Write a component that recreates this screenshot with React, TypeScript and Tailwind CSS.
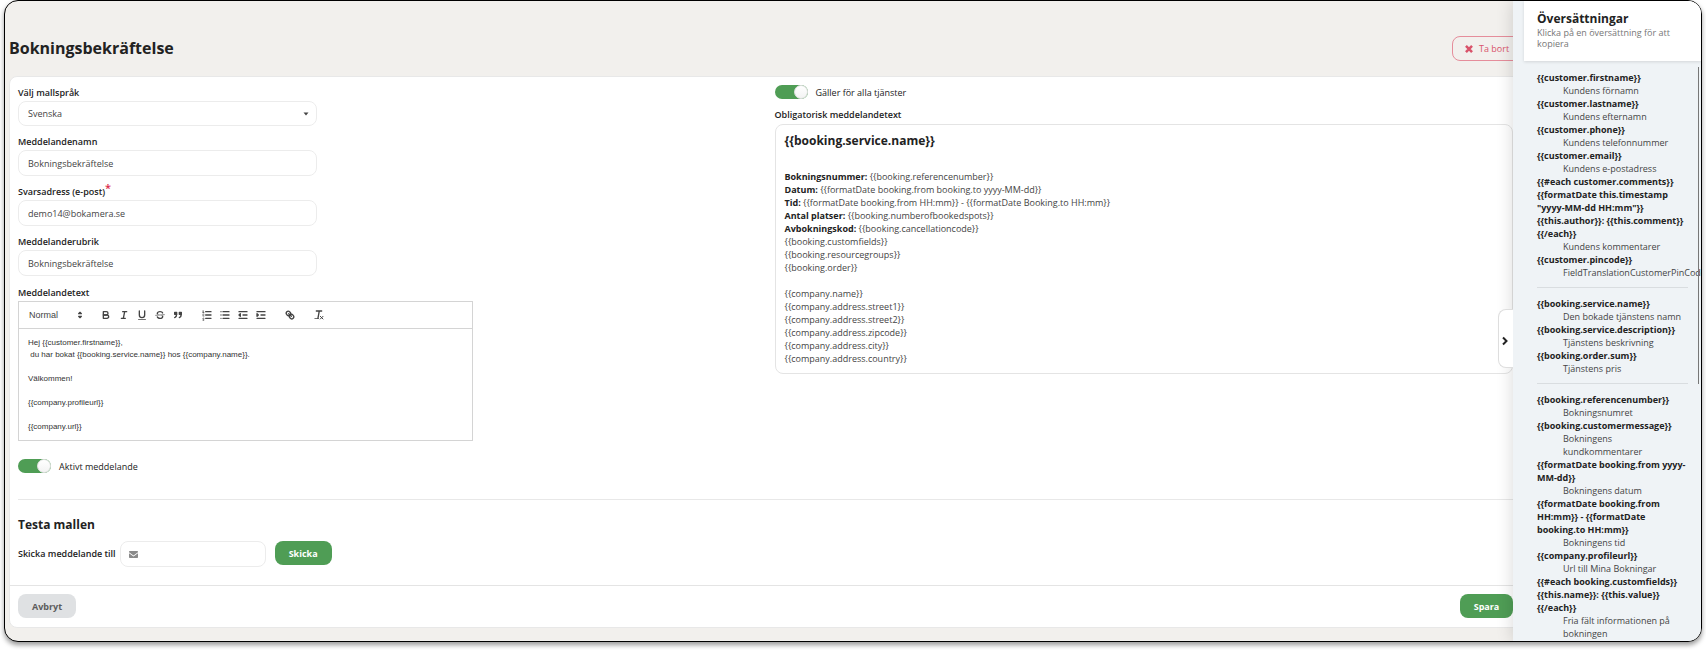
import type { ReactNode } from "react";

function Toggle({ id, label }: { id: string; label: string }) {
  return (
    <label htmlFor={id} className="flex w-fit cursor-pointer items-center gap-2">
      <input id={id} type="checkbox" defaultChecked className="peer sr-only" />
      <span className="flex h-[14px] w-[33px] items-center justify-end rounded-full bg-[#4f9d55]">
        <span className="size-[14px] rounded-full border border-[#e2e2e2] bg-gradient-to-b from-white to-[#f3f3f3]" />
      </span>
      <span>{label}</span>
    </label>
  );
}

const labelClass = "mb-[2px] flex h-[14px] items-center font-semibold";
const inputClass =
  "block h-[26px] w-full rounded-lg border border-[#ececec] bg-white px-[9px] text-[#444] outline-none";

function Field({
  id,
  label,
  value,
  required,
}: {
  id: string;
  label: string;
  value: string;
  required?: boolean;
}) {
  return (
    <div className="mt-2 max-w-[299px]">
      <label htmlFor={id} className={labelClass}>
        {label}
        {required && <span className="self-start text-[11px] leading-[8px] text-[#db2b49]">*</span>}
      </label>
      <input id={id} className={inputClass} defaultValue={value} />
    </div>
  );
}

function Tool({ label, children }: { label: string; children: ReactNode }) {
  return (
    <button type="button" aria-label={label} className="flex h-4 w-[18px] items-center justify-center">
      <svg viewBox="0 0 18 18" className="size-3" fill="none" stroke="#444" strokeWidth="2" strokeLinecap="round" strokeLinejoin="round">
        {children}
      </svg>
    </button>
  );
}

function Toolbar() {
  return (
    <div className="flex h-[27px] items-center gap-[11px] border-b border-[#d4d4d4] px-[5px]">
      <div className="relative flex w-[62px] items-center">
        <select aria-label="Textformat" className="w-full appearance-none bg-transparent pl-[5px] font-['Liberation_Sans',sans-serif] text-[9px] text-[#444] outline-none">
          <option>Normal</option>
        </select>
        <svg viewBox="0 0 18 18" className="pointer-events-none absolute right-0 size-3" fill="#444" stroke="#444" strokeWidth="2" strokeLinejoin="round">
          <polygon points="7 11 9 13 11 11" />
          <polygon points="7 7 9 5 11 7" />
        </svg>
      </div>
      <div className="flex">
        <Tool label="Fet">
          <path d="M5,4H9.5A2.5,2.5,0,0,1,12,6.5v0A2.5,2.5,0,0,1,9.5,9H5A0,0,0,0,1,5,9V4A0,0,0,0,1,5,4Z" />
          <path d="M5,9h5.5A2.5,2.5,0,0,1,13,11.5v0A2.5,2.5,0,0,1,10.5,14H5a0,0,0,0,1,0,0V9A0,0,0,0,1,5,9Z" />
        </Tool>
        <Tool label="Kursiv">
          <line x1="7" x2="13" y1="4" y2="4" />
          <line x1="5" x2="11" y1="14" y2="14" />
          <line x1="8" x2="10" y1="14" y2="4" />
        </Tool>
        <Tool label="Understruken">
          <path d="M5,3V9a4.012,4.012,0,0,0,4,4H9a4.012,4.012,0,0,0,4-4V3" />
          <rect fill="#444" stroke="none" height="1" rx="0.5" ry="0.5" width="12" x="3" y="15" />
        </Tool>
        <Tool label="Genomstruken">
          <line strokeWidth="1" x1="15.5" x2="2.5" y1="8.5" y2="9.5" />
          <path fill="#444" stroke="none" d="M9.007,8C6.542,7.791,6,7.519,6,6.5,6,5.792,7.283,5,9,5c1.571,0,2.765.679,2.969,1.309a1,1,0,0,0,1.9-.617C13.356,4.106,11.354,3,9,3,6.2,3,4,4.538,4,6.5a3.2,3.2,0,0,0,.5,1.843Z" />
          <path fill="#444" stroke="none" d="M8.984,10C11.457,10.208,12,10.479,12,11.5c0,0.708-1.283,1.5-3,1.5-1.571,0-2.765-.679-2.969-1.309a1,1,0,1,0-1.9.617C4.644,13.894,6.646,15,9,15c2.8,0,5-1.538,5-3.5a3.2,3.2,0,0,0-.5-1.843Z" />
        </Tool>
        <Tool label="Citat">
          <g fill="#444">
            <rect height="3" width="3" x="4" y="5" />
            <rect height="3" width="3" x="11" y="5" />
            <path d="M7,8c0,4.031-3,5-3,5" />
            <path d="M14,8c0,4.031-3,5-3,5" />
          </g>
        </Tool>
      </div>
      <div className="flex">
        <Tool label="Numrerad lista">
          <path d="M7 4h8M7 9h8M7 14h8" />
          <path strokeWidth="1" d="M2.5 5.5h2M3.5 5.5v-3l-1 .5M4.5 10.5h-2c0-1 1.9-1.2 1.9-2.1 0-.9-1.3-1.1-1.9-.4M2.5 14.2a1 1 0 1 1 .9 1.3 1 1 0 1 1-.9 1.2" />
        </Tool>
        <Tool label="Punktlista">
          <path d="M6 4h9M6 9h9M6 14h9M3 4h0M3 9h0M3 14h0" />
        </Tool>
        <Tool label="Minska indrag">
          <path d="M3 14h12M3 4h12M9 9h6" />
          <polyline points="5 7 5 11 3 9 5 7" />
        </Tool>
        <Tool label="Öka indrag">
          <path d="M3 14h12M3 4h12M9 9h6" />
          <polyline fill="#444" points="3 7 3 11 5 9 3 7" />
        </Tool>
      </div>
      <Tool label="Länk">
        <line x1="7" x2="11" y1="7" y2="11" />
        <path d="M8.9,4.577a3.476,3.476,0,0,1,.36,4.679A3.476,3.476,0,0,1,4.577,8.9C3.185,7.5,2.035,6.4,4.217,4.217S7.5,3.185,8.9,4.577Z" />
        <path d="M13.423,9.1a3.476,3.476,0,0,0-4.679-.36,3.476,3.476,0,0,0,.36,4.679c1.392,1.392,2.5,2.542,4.679.36S14.815,10.5,13.423,9.1Z" />
      </Tool>
      <Tool label="Rensa format">
        <path d="M5 3h8M7.4 14 9.3 3.5" />
        <path strokeWidth="1.5" d="M11 11l4 4M15 11l-4 4" />
        <rect fill="#444" stroke="none" height="1" rx="0.5" width="7" x="2" y="14" />
      </Tool>
    </div>
  );
}

const message = `Hej {{customer.firstname}},
 du har bokat {{booking.service.name}} hos {{company.name}}.

Välkommen!

{{company.profileurl}}

{{company.url}}`;

const bookingLines: [string, string][] = [
  ["Bokningsnummer:", "{{booking.referencenumber}}"],
  ["Datum:", "{{formatDate booking.from booking.to yyyy-MM-dd}}"],
  ["Tid:", "{{formatDate booking.from HH:mm}} - {{formatDate Booking.to HH:mm}}"],
  ["Antal platser:", "{{booking.numberofbookedspots}}"],
  ["Avbokningskod:", "{{booking.cancellationcode}}"],
  ["", "{{booking.customfields}}"],
  ["", "{{booking.resourcegroups}}"],
  ["", "{{booking.order}}"],
];

const companyLines = [
  "{{company.name}}",
  "{{company.address.street1}}",
  "{{company.address.street2}}",
  "{{company.address.zipcode}}",
  "{{company.address.city}}",
  "{{company.address.country}}",
];

const translations: [string[], string][][] = [
  [
    [["{{customer.firstname}}"], "Kundens förnamn"],
    [["{{customer.lastname}}"], "Kundens efternamn"],
    [["{{customer.phone}}"], "Kundens telefonnummer"],
    [["{{customer.email}}"], "Kundens e-postadress"],
    [
      ["{{#each customer.comments}}", '{{formatDate this.timestamp "yyyy-MM-dd HH:mm"}}', "{{this.author}}: {{this.comment}}", "{{/each}}"],
      "Kundens kommentarer",
    ],
    [["{{customer.pincode}}"], "FieldTranslationCustomerPinCode"],
  ],
  [
    [["{{booking.service.name}}"], "Den bokade tjänstens namn"],
    [["{{booking.service.description}}"], "Tjänstens beskrivning"],
    [["{{booking.order.sum}}"], "Tjänstens pris"],
  ],
  [
    [["{{booking.referencenumber}}"], "Bokningsnumret"],
    [["{{booking.customermessage}}"], "Bokningens kundkommentarer"],
    [["{{formatDate booking.from yyyy-MM-dd}}"], "Bokningens datum"],
    [["{{formatDate booking.from HH:mm}} - {{formatDate booking.to HH:mm}}"], "Bokningens tid"],
    [["{{company.profileurl}}"], "Url till Mina Bokningar"],
    [["{{#each booking.customfields}}", "{{this.name}}: {{this.value}}", "{{/each}}"], "Fria fält informationen på bokningen"],
  ],
];

function Translations() {
  return (
    <aside className="absolute inset-y-0 right-0 w-[188px] bg-[#eff3f6] shadow-[0_0_16px_rgba(0,0,0,0.16)]">
      <button
        type="button"
        aria-label="Dölj översättningar"
        className="absolute top-[308px] right-full flex h-[59px] w-[15px] items-center justify-center rounded-l-lg border border-r-0 border-[#dedede] bg-white pt-1 pr-[2px]"
      >
        <svg viewBox="0 0 8 10" className="h-[10px] w-2" fill="none" stroke="#222" strokeWidth="2">
          <path d="M2 1.5 5.5 5 2 8.5" />
        </svg>
      </button>
      <div className="flex h-full flex-col overflow-hidden">
        <header className="ml-[11px] shrink-0 bg-white px-[13px] pt-[10px] pb-3 shadow-[0_1px_3px_rgba(0,0,0,0.12)]">
          <h2 className="text-[12px] leading-4 font-bold">Översättningar</h2>
          <p className="leading-[11px] text-[#777]">Klicka på en översättning för att kopiera</p>
        </header>
        <div className="relative min-h-0 flex-1">
          <div className="absolute inset-0 overflow-hidden pt-[10px] pr-[13px] pl-6">
            {translations.map((group, i) => (
              <dl key={i} className={i > 0 ? "mt-2 border-t border-[#d9dde0] pt-[9px]" : ""}>
                {group.map(([codes, text]) => (
                  <div key={text}>
                    {codes.map((code) => (
                      <dt key={code} className="font-bold">
                        {code}
                      </dt>
                    ))}
                    <dd className="pl-[26px] text-[#444]">{text}</dd>
                  </div>
                ))}
              </dl>
            ))}
          </div>
          <span className="absolute top-[6px] right-[2px] h-[317px] w-px bg-[#777]" />
        </div>
      </div>
    </aside>
  );
}

export default function App() {
  return (
    <div className="bg-white px-1 pb-2 font-['Open_Sans',sans-serif] text-[9px] leading-[13px] text-[#222]">
      <div className="relative overflow-hidden rounded-[14px] border border-black bg-[#f2f0ed] shadow-[0_3px_5px_rgba(0,0,0,0.4)]">
        <main className="pt-[35px] pr-[179px] pb-[13px] pl-1">
          <div className="flex items-start justify-between">
            <h1 className="text-[16px] leading-6 font-bold">Bokningsbekräftelse</h1>
            <button type="button" className="flex h-[25px] w-[70px] items-center gap-[6px] rounded-lg border border-[#e58d9b] pl-3 text-[#d9546b]">
              <svg viewBox="0 0 10 10" className="size-2" stroke="currentColor" strokeWidth="3.2">
                <path d="M1.2 1.2 8.8 8.8M8.8 1.2 1.2 8.8" />
              </svg>
              Ta bort
            </button>
          </div>

          <form className="mt-[15px] rounded-lg border border-[#e8e8e8] bg-white" onSubmit={(e) => e.preventDefault()}>
            <div className="px-2">
              <div className="grid grid-cols-2 gap-[18px] pt-2">
                <section>
                  <div className="max-w-[299px]">
                    <label htmlFor="language" className={labelClass}>
                      Välj mallspråk
                    </label>
                    <div className="relative">
                      <select id="language" className="block h-[25px] w-full appearance-none rounded-lg border border-[#ececec] bg-white px-[9px] text-[#444] outline-none">
                        <option>Svenska</option>
                      </select>
                      <svg viewBox="0 0 6 4" className="pointer-events-none absolute top-[11px] right-2 h-1 w-[6px] fill-[#444]">
                        <path d="M.5.5h5L3 3.5Z" />
                      </svg>
                    </div>
                  </div>
                  <Field id="name" label="Meddelandenamn" value="Bokningsbekräftelse" />
                  <Field id="reply" label="Svarsadress (e-post)" value="demo14@bokamera.se" required />
                  <Field id="subject" label="Meddelanderubrik" value="Bokningsbekräftelse" />
                  <div className="mt-[9px] max-w-[455px]">
                    <label htmlFor="body" className={labelClass}>
                      Meddelandetext
                    </label>
                    <div className="border border-[#d4d4d4]">
                      <Toolbar />
                      <textarea
                        id="body"
                        rows={8}
                        defaultValue={message}
                        className="block w-full resize-none overflow-hidden px-[9px] pt-2 pb-[7px] font-['Liberation_Sans',sans-serif] text-[8px] leading-3 text-[#333] outline-none"
                      />
                    </div>
                  </div>
                  <div className="mt-[18px]">
                    <Toggle id="active" label="Aktivt meddelande" />
                  </div>
                </section>

                <section>
                  <Toggle id="all" label="Gäller för alla tjänster" />
                  <h3 className="mt-[9px] font-semibold">Obligatorisk meddelandetext</h3>
                  <div className="mt-[3px] rounded-lg border border-[#e4e4e4] px-[9px] pt-[7px] pb-2 text-[#444]">
                    <h2 className="mb-5 text-[12px] leading-[18px] font-bold text-[#222]">{"{{booking.service.name}}"}</h2>
                    {bookingLines.map(([name, value]) => (
                      <p key={value}>
                        {name && <strong className="text-[#222]">{name} </strong>}
                        {value}
                      </p>
                    ))}
                    <div className="mt-[13px]">
                      {companyLines.map((line) => (
                        <p key={line}>{line}</p>
                      ))}
                    </div>
                  </div>
                </section>
              </div>

              <section className="mt-[26px] border-t border-[#e8e8e8] pt-4 pb-[18px]">
                <h2 className="text-[12px] leading-[18px] font-bold">Testa mallen</h2>
                <div className="mt-[7px] flex items-start">
                  <label htmlFor="test" className="leading-[25px] font-semibold">
                    Skicka meddelande till
                  </label>
                  <div className="relative ml-1 w-[146px]">
                    <input id="test" type="email" className="block h-[26px] w-full rounded-lg border border-[#ececec] bg-white pr-2 pl-6 outline-none" />
                    <svg viewBox="0 0 18 14" className="pointer-events-none absolute top-[10px] left-[9px] h-[7px] w-[9px] fill-[#8a8a8a]">
                      <path d="M1.5 0h15A1.5 1.5 0 0 1 18 1.5v1L9 9 0 2.500v-1A1.500 1.500 0 0 1 1.500 0Z" />
                      <path d="M0 4.600 9 11l9-6.400v7.900A1.500 1.500 0 0 1 16.500 14h-15A1.500 1.500 0 0 1 0 12.500Z" />
                    </svg>
                  </div>
                  <button type="submit" className="ml-[9px] h-6 w-[57px] rounded-lg bg-[#4f9d55] font-bold text-white">
                    Skicka
                  </button>
                </div>
              </section>
            </div>
            <footer className="flex items-center justify-between border-t border-[#e4e4e4] px-2 pt-2 pb-[9px]">
              <button type="button" className="h-6 w-[58px] rounded-lg bg-[#dfe1e3] font-bold text-[#5c5c5c]">
                Avbryt
              </button>
              <button type="submit" className="h-6 w-[53px] rounded-lg bg-[#4f9d55] font-bold text-white">
                Spara
              </button>
            </footer>
          </form>
        </main>
        <Translations />
      </div>
    </div>
  );
}
